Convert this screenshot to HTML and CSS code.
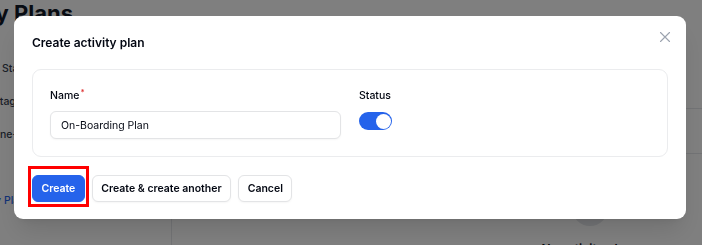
FILE: index.html
```html
<!DOCTYPE html>
<html lang="en">
<head>
    <meta charset="UTF-8">
    <meta name="viewport" content="width=device-width, initial-scale=1.0">
    <title>Activity Plans</title>
    <link rel="stylesheet" href="styles.css">
</head>
<body>
<div class="page">
    <h1 class="page-title">Activity Plans</h1>
    <div class="layout">
        <nav class="side">
            <a class="side-item side-first">Status</a>
            <a class="side-item side-stages">Stages</a>
            <a class="side-item side-one">One-off tasks</a>
            <div class="side-spacer"></div>
            <a class="side-item side-active">Activity Plans</a>
        </nav>
        <main class="main">
            <div class="toolbar"></div>
            <div class="table-head"></div>
            <div class="empty">
                <div class="empty-icon"></div>
                <div class="empty-title">No activity plans</div>
            </div>
        </main>
    </div>
</div>

<div class="overlay">
    <div class="modal">
        <div class="modal-header">
            <h2>Create activity plan</h2>
            <button class="close" type="button" aria-label="Close">
                <svg viewBox="0 0 24 24" width="18" height="18" fill="none" stroke="currentColor" stroke-width="1.5" stroke-linecap="round">
                    <path d="M6 18L18 6M6 6l12 12"/>
                </svg>
            </button>
        </div>
        <form class="modal-form">
            <div class="section">
                <div class="field">
                    <label for="name">Name<sup>*</sup></label>
                    <input type="text" id="name" value="On-Boarding Plan">
                </div>
                <div class="field">
                    <label>Status</label>
                    <span class="toggle"><span class="knob"></span></span>
                </div>
            </div>
            <div class="actions">
                <span class="primary-wrap">
                    <button type="submit" class="btn btn-primary">Create</button>
                    <span class="highlight"></span>
                </span>
                <button type="button" class="btn">Create &amp; create another</button>
                <button type="button" class="btn">Cancel</button>
            </div>
        </form>
    </div>
</div>
</body>
</html>
```

FILE: styles.css
```css
* {
    margin: 0;
    padding: 0;
    box-sizing: border-box;
}

body {
    font-family: 'Inter', 'Noto Sans', sans-serif;
    background-color: #ffffff;
    color: #030712;
    overflow: hidden;
    width: 702px;
    height: 245px;
}

/* page behind the modal */
.page {
    width: 702px;
    height: 245px;
    overflow: hidden;
}

.page-title {
    font-size: 22px;
    font-weight: 700;
    line-height: 26px;
    text-indent: -75px;
    color: #111827;
    white-space: nowrap;
}

.layout {
    display: flex;
}

.side {
    flex-shrink: 0;
    width: 172px;
    border-right: 1px solid #e5e7eb;
    padding-top: 26px;
    height: 300px;
    display: flex;
    flex-direction: column;
    overflow: hidden;
}

.side-item {
    display: block;
    height: 33px;
    line-height: 33px;
    font-size: 10.5px;
    font-weight: 500;
    color: #374151;
    white-space: nowrap;
}

.side-first { text-indent: 2px; }
.side-stages { text-indent: -7px; }
.side-one { text-indent: -8px; }
.side-active { text-indent: -37px; color: #2563eb; }

.side-spacer {
    height: 33px;
}

.main {
    flex-shrink: 0;
    width: 836px;
}

.toolbar {
    height: 83px;
    border-bottom: 1px solid #e5e7eb;
}

.table-head {
    height: 45px;
    border-bottom: 1px solid #e5e7eb;
}

.empty {
    display: flex;
    flex-direction: column;
    align-items: center;
    padding-top: 36px;
}

.empty-icon {
    width: 36px;
    height: 36px;
    border-radius: 50%;
    background-color: #e5e7eb;
    margin-bottom: 15px;
}

.empty-title {
    font-size: 12px;
    font-weight: 600;
    line-height: 15px;
}

/* modal */
.overlay {
    position: fixed;
    inset: 0;
    background-color: rgba(0, 0, 0, 0.5);
    padding: 16px 0 0 14px;
}

.modal {
    position: relative;
    width: 672px;
    background-color: white;
    border-radius: 9px;
    padding: 18px 18px 17px;
    box-shadow: 0 15px 25px -5px rgba(0, 0, 0, 0.12), 0 6px 10px -6px rgba(0, 0, 0, 0.1);
}

.modal-header {
    margin-bottom: 17px;
}

.modal-header h2 {
    font-size: 12px;
    font-weight: 600;
    line-height: 18px;
}

.close {
    position: absolute;
    top: 12px;
    right: 12px;
    width: 18px;
    height: 18px;
    border: none;
    background: none;
    color: #9ca3af;
    display: flex;
}

.section {
    border: 1px solid #ebecee;
    border-radius: 9px;
    padding: 18px 17px 17px;
    display: grid;
    grid-template-columns: 1fr 1fr;
    gap: 18px;
    margin-bottom: 18px;
}

.field {
    display: flex;
    flex-direction: column;
    align-items: flex-start;
    gap: 8px;
}

label {
    font-size: 10.5px;
    font-weight: 500;
    line-height: 15px;
}

label sup {
    color: #dc2626;
    font-size: 8px;
    margin-left: 1px;
    vertical-align: 4px;
    line-height: 0;
}

input {
    width: 100%;
    height: 28px;
    padding: 0 10px;
    border: 1px solid #e3e4e6;
    border-radius: 6px;
    font-family: inherit;
    font-size: 10.5px;
    color: #030712;
    box-shadow: 0 1px 2px rgba(0, 0, 0, 0.04);
}

.toggle {
    display: flex;
    justify-content: flex-end;
    width: 33px;
    height: 18px;
    padding: 1.5px;
    margin-top: 1px;
    border-radius: 9px;
    background-color: #2563eb;
}

.knob {
    width: 15px;
    height: 15px;
    border-radius: 50%;
    background-color: white;
}

.actions {
    display: flex;
    gap: 7px;
}

.primary-wrap {
    position: relative;
    display: flex;
}

.btn {
    height: 27px;
    padding: 0 8.5px;
    border: 1px solid #e3e4e6;
    border-radius: 6px;
    background-color: white;
    font-family: inherit;
    font-size: 10.5px;
    font-weight: 600;
    color: #030712;
    box-shadow: 0 1px 2px rgba(0, 0, 0, 0.04);
}

.btn-primary {
    background-color: #2563eb;
    border-color: #2563eb;
    color: white;
}

.highlight {
    position: absolute;
    left: -4px;
    top: -9px;
    width: 61px;
    height: 41px;
    border: 3px solid #ff0000;
}
```
